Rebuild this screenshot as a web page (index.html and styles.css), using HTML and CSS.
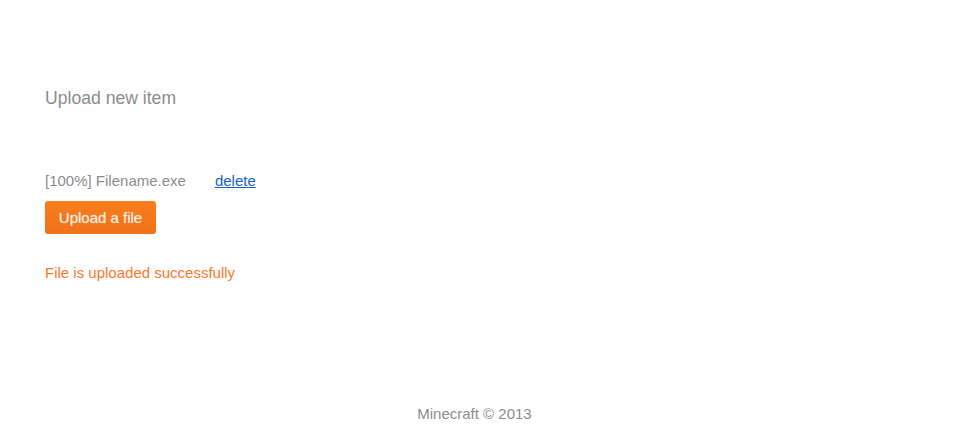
FILE: index.html
```html
<!DOCTYPE html>
<html>
<head>
<meta charset="utf-8">
<link rel="stylesheet" href="styles.css">
</head>
<body>
<div class="page">
  <main class="content">
    <h1 class="title">Upload new item</h1>
    <div class="file-row">
      <span class="file-name">[100%] Filename.exe</span>
      <a class="delete" href="#">delete</a>
    </div>
    <button class="upload-btn" type="button">Upload a file</button>
    <p class="status">File is uploaded successfully</p>
  </main>
  <footer class="footer">Minecraft © 2013</footer>
</div>
</body>
</html>
```

FILE: styles.css
```css
* { box-sizing: border-box; }
html, body { margin: 0; padding: 0; background: #fff; }
body { font-family: "Liberation Sans", Arial, sans-serif; color: #888; }
.page { width: 967px; height: 434px; display: flex; flex-direction: column; }
.content { padding: 87px 45px 0; flex: 1; }
.title { margin: 0; font-size: 17.6px; font-weight: normal; color: #8c8c8c; line-height: 22px; }
.file-row { margin-top: 63px; display: flex; gap: 29px; font-size: 15px; line-height: 18px; }
.file-name { color: #8c8c8c; }
.delete { color: #1a5fc8; text-decoration: underline; }
.upload-btn {
  margin-top: 11px; display: block; width: 111px; height: 33px; border: none; border-radius: 3px;
  background: linear-gradient(#fa7e1e, #ef7218);
  color: rgba(255,255,255,0.82); font-family: "Liberation Sans", Arial, sans-serif; font-size: 15px;
  text-shadow: 0 0 1px rgba(255,255,255,0.6); padding: 0; cursor: pointer;
}
.status { margin: 30px 0 0; font-size: 15px; line-height: 18px; color: #f8792a; }
.footer { text-align: center; font-size: 15px; color: #8c8c8c; padding: 0 18px 12px 0; }
```
